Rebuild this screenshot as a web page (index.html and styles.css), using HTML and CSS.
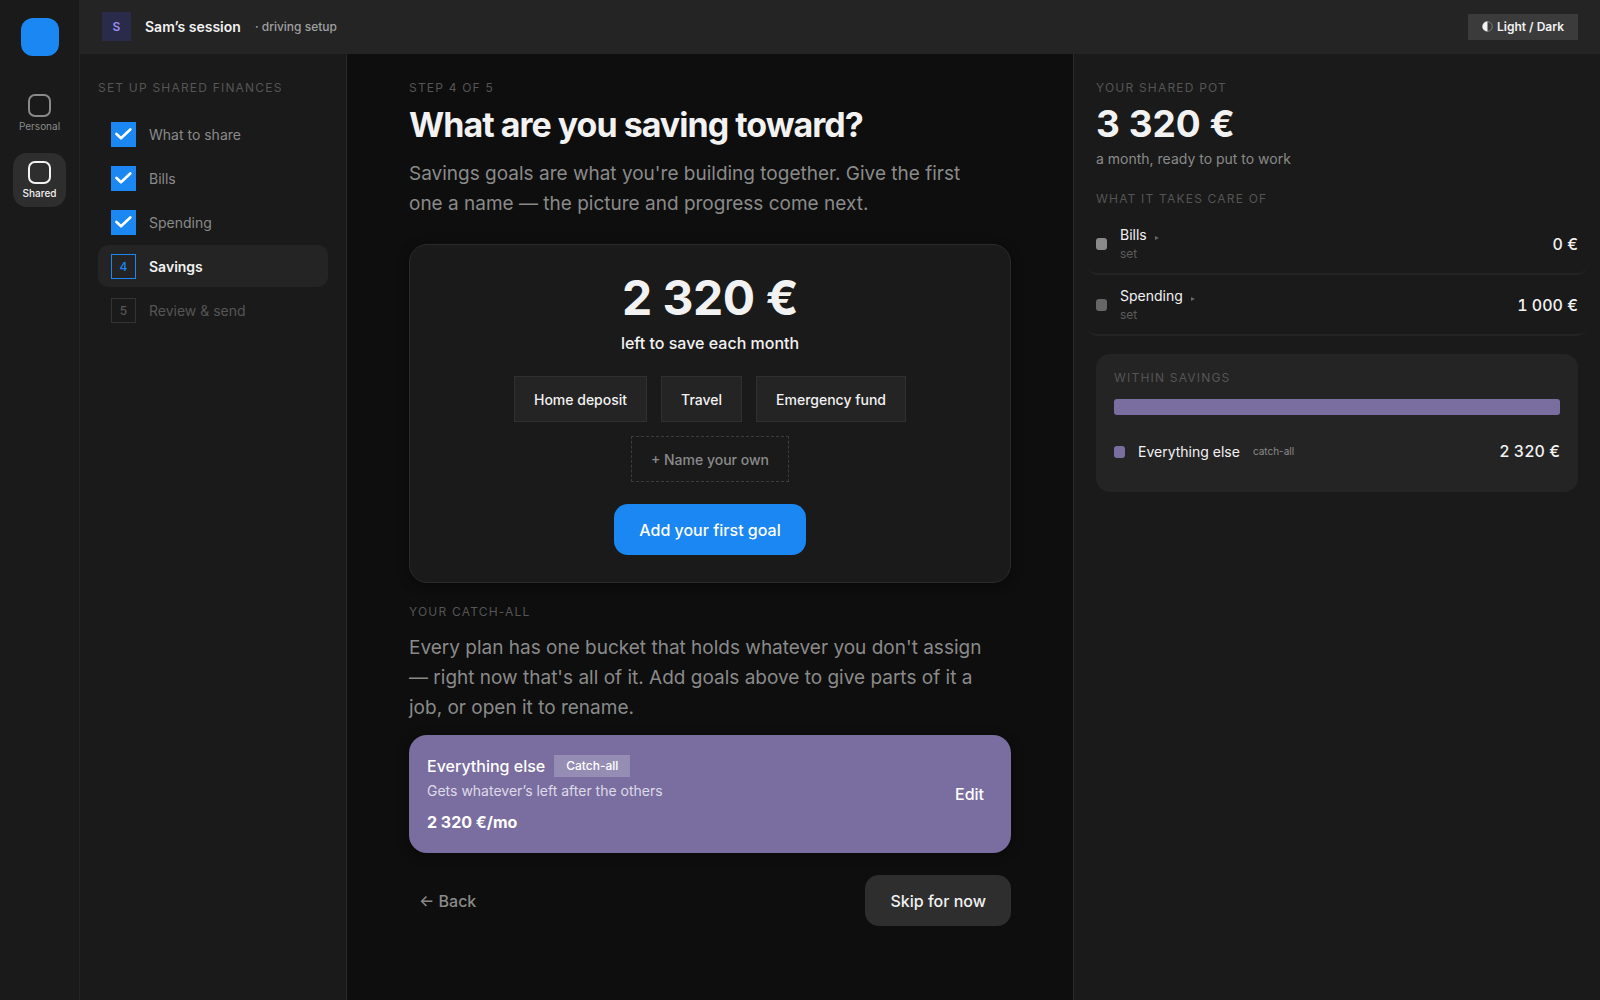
FILE: index.html
```html
<!DOCTYPE html>
<html lang="en">
<head>
  <meta charset="UTF-8" />
  <meta name="viewport" content="width=device-width, initial-scale=1.0"/>
  <title>Set up shared finances</title>
  <link rel="stylesheet" href="styles.css">
</head>
<body>

  <!-- Left rail -->
  <nav class="rail">
    <div class="logo"></div>
    <a href="#personal" class="rail-item">
      <span class="rail-icon"></span>
      Personal
    </a>
    <a href="#shared" class="rail-item active">
      <span class="rail-icon"></span>
      Shared
    </a>
  </nav>

  <div class="app">
    <header class="topbar">
      <span class="avatar">S</span>
      <strong>Sam’s session</strong>
      <span class="session-note">· driving setup</span>
      <button type="button" class="theme-btn">
        <svg width="11" height="11" viewBox="0 0 11 11">
          <circle cx="5.5" cy="5.5" r="4.8" fill="none" stroke="#8a8a8a" stroke-width="0.8"/>
          <path d="M5.5 .4a5.1 5.1 0 0 0 0 10.2z" fill="#f2f2f2"/>
        </svg>
        Light / Dark
      </button>
    </header>

    <div class="columns">

      <!-- Setup steps -->
      <aside class="steps">
        <h2 class="eyebrow">Set up shared finances</h2>
        <ol>
          <li class="step done">
            <span class="step-box"><svg width="17" height="12" viewBox="0 0 17 12"><path d="M1.5 6 6 10.3 15.3 1.5"/></svg></span>
            What to share
          </li>
          <li class="step done">
            <span class="step-box"><svg width="17" height="12" viewBox="0 0 17 12"><path d="M1.5 6 6 10.3 15.3 1.5"/></svg></span>
            Bills
          </li>
          <li class="step done">
            <span class="step-box"><svg width="17" height="12" viewBox="0 0 17 12"><path d="M1.5 6 6 10.3 15.3 1.5"/></svg></span>
            Spending
          </li>
          <li class="step current"><span class="step-box">4</span>Savings</li>
          <li class="step"><span class="step-box">5</span>Review &amp; send</li>
        </ol>
      </aside>

      <main class="content">
        <p class="eyebrow">Step 4 of 5</p>
        <h1>What are you saving toward?</h1>
        <p class="lead">Savings goals are what you're building together. Give the first one a name — the picture and progress come next.</p>

        <section class="goal-card">
          <p class="big-amount">2&nbsp;320&nbsp;€</p>
          <p class="big-label">left to save each month</p>
          <div class="chips">
            <button type="button" class="chip">Home deposit</button>
            <button type="button" class="chip">Travel</button>
            <button type="button" class="chip">Emergency fund</button>
            <button type="button" class="chip dashed">+ Name your own</button>
          </div>
          <button type="button" class="btn primary">Add your first goal</button>
        </section>

        <h2 class="eyebrow">Your catch-all</h2>
        <p class="lead catch-lead">Every plan has one bucket that holds whatever you don't assign — right now that's all of it. Add goals above to give parts of it a job, or open it to rename.</p>

        <section class="bucket">
          <div class="bucket-info">
            <h3>Everything else <span class="tag">Catch-all</span></h3>
            <p>Gets whatever’s left after the others</p>
            <strong>2&nbsp;320&nbsp;€/mo</strong>
          </div>
          <button type="button" class="edit-btn">Edit</button>
        </section>

        <div class="actions">
          <button type="button" class="back-btn">← Back</button>
          <button type="button" class="btn">Skip for now</button>
        </div>
      </main>

      <!-- Shared pot summary -->
      <aside class="pot">
        <h2 class="eyebrow">Your shared pot</h2>
        <p class="pot-amount">3&nbsp;320&nbsp;€</p>
        <p class="pot-note">a month, ready to put to work</p>

        <h2 class="eyebrow">What it takes care of</h2>
        <ul class="pot-list">
          <li>
            <span class="dot"></span>
            <div class="pot-name">
              <span>Bills <svg class="caret" width="4" height="4" viewBox="0 0 4 4"><path d="M0 0 4 2 0 4z"/></svg></span>
              <small>set</small>
            </div>
            <span class="amount">0&nbsp;€</span>
          </li>
          <li>
            <span class="dot dim"></span>
            <div class="pot-name">
              <span>Spending <svg class="caret" width="4" height="4" viewBox="0 0 4 4"><path d="M0 0 4 2 0 4z"/></svg></span>
              <small>set</small>
            </div>
            <span class="amount">1&nbsp;000&nbsp;€</span>
          </li>
        </ul>

        <section class="within">
          <h2 class="eyebrow">Within savings</h2>
          <div class="bar"></div>
          <div class="within-row">
            <span class="dot purple"></span>
            <span class="within-name">Everything else</span>
            <span class="within-tag">catch-all</span>
            <span class="amount">2&nbsp;320&nbsp;€</span>
          </div>
        </section>
      </aside>

    </div>
  </div>

</body>
</html>
```

FILE: styles.css
```css
:root {
  --bg: #0e0e0e;
  --panel: #1a1a1a;
  --raised: #242424;
  --line: #2b2b2b;
  --text: #f2f2f2;
  --muted: #8a8a8a;
  --faint: #555;
  --blue: #1a87f2;
  --purple: #7a6ea0;
}

* {
  box-sizing: border-box;
}

body {
  margin: 0;
  min-height: 100vh;
  display: flex;
  font-family: Inter, "Liberation Sans", sans-serif;
  font-size: 14px;
  background-color: var(--bg);
  color: var(--text);
}

h1, h2, h3, p, ol, ul {
  margin: 0;
  padding: 0;
}

ol, ul {
  list-style: none;
}

button {
  font-family: inherit;
  color: inherit;
  border: none;
  cursor: pointer;
}

.eyebrow {
  font-size: 12px;
  font-weight: 400;
  line-height: 16px;
  letter-spacing: 0.1em;
  text-transform: uppercase;
  color: var(--faint);
}

/* Left rail */
.rail {
  width: 80px;
  flex-shrink: 0;
  display: flex;
  flex-direction: column;
  align-items: center;
  padding: 18px 0;
  background-color: var(--panel);
  border-right: 1px solid var(--raised);
}

.logo {
  width: 38px;
  height: 38px;
  margin-bottom: 30px;
  border-radius: 12px;
  background-color: var(--blue);
}

.rail-item {
  width: 53px;
  height: 54px;
  margin-bottom: 13px;
  display: flex;
  flex-direction: column;
  align-items: center;
  justify-content: center;
  gap: 2px;
  border-radius: 14px;
  font-size: 10px;
  line-height: 14px;
  color: var(--muted);
  text-decoration: none;
}

.rail-item.active {
  background-color: #2e2e2e;
  color: var(--text);
  font-weight: 500;
}

.rail-icon {
  width: 23px;
  height: 23px;
  border: 2px solid;
  border-radius: 7px;
}

/* Top bar */
.app {
  flex: 1;
  min-width: 0;
  display: flex;
  flex-direction: column;
}

.topbar {
  height: 54px;
  display: flex;
  align-items: center;
  padding: 0 22px;
  background-color: var(--raised);
  border-bottom: 1px solid var(--raised);
}

.topbar strong {
  margin: 0 14px;
  font-size: 14px;
  font-weight: 600;
}

.avatar {
  width: 29px;
  height: 29px;
  display: flex;
  align-items: center;
  justify-content: center;
  background-color: #2a2a4a;
  color: #9b8ff5;
  font-size: 12px;
  font-weight: 600;
}

.session-note {
  font-size: 12px;
  font-weight: 500;
  color: #a0a0a0;
}

.theme-btn {
  margin-left: auto;
  height: 26px;
  padding: 0 14px;
  display: flex;
  align-items: center;
  gap: 4px;
  background-color: #3b3b3b;
  font-size: 12px;
  font-weight: 600;
}

.columns {
  flex: 1;
  display: grid;
  grid-template-columns: 267px 1fr 527px;
}

/* Setup steps */
.steps {
  padding: 26px 18px;
  background-color: var(--panel);
  border-right: 1px solid var(--line);
}

.steps ol {
  margin-top: 17px;
  display: grid;
  gap: 2px;
}

.step {
  height: 42px;
  padding: 0 13px;
  display: flex;
  align-items: center;
  gap: 13px;
  border-radius: 10px;
  color: var(--faint);
}

.step.done {
  color: var(--muted);
}

.step.current {
  background-color: var(--raised);
  color: var(--text);
  font-weight: 600;
}

.step-box {
  width: 25px;
  height: 25px;
  display: flex;
  align-items: center;
  justify-content: center;
  border: 1px solid #333;
  font-size: 12px;
  font-weight: 500;
}

.done .step-box {
  background-color: var(--blue);
  border-color: var(--blue);
}

.current .step-box {
  border-color: var(--blue);
  color: var(--blue);
}

.step-box path {
  fill: none;
  stroke: #fff;
  stroke-width: 2.6;
  stroke-linecap: round;
  stroke-linejoin: round;
}

/* Main column */
.content {
  width: 100%;
  max-width: 602px;
  margin: 0 auto;
  padding: 26px 0 72px;
}

h1 {
  margin: 7px 0 12px;
  font-size: 34px;
  font-weight: 700;
  line-height: 44px;
  letter-spacing: -1px;
}

.lead {
  max-width: 580px;
  font-size: 19px;
  line-height: 30px;
  color: var(--muted);
}

.goal-card {
  margin: 25px 0 21px;
  padding: 28px 80px 27px;
  display: flex;
  flex-direction: column;
  align-items: center;
  background-color: var(--panel);
  border: 1px solid var(--line);
  border-radius: 18px;
  box-shadow: 0 2px 12px rgba(0,0,0,0.4);
}

.big-amount {
  font-size: 48px;
  font-weight: 700;
  line-height: 50px;
  letter-spacing: -0.01em;
}

.big-label {
  margin-top: 10px;
  font-size: 16px;
  font-weight: 500;
  line-height: 20px;
}

.chips {
  margin: 23px 0 22px;
  display: flex;
  flex-wrap: wrap;
  justify-content: center;
  gap: 14px;
}

.chip {
  height: 46px;
  padding: 0 19px;
  background-color: var(--raised);
  border: 1px solid #303030;
  font-size: 14px;
  font-weight: 500;
}

.chip.dashed {
  background: none;
  border: 1px dashed #3c3c3c;
  color: var(--muted);
}

.btn {
  height: 51px;
  padding: 0 25px;
  border-radius: 14px;
  background-color: #2e2e2e;
  font-size: 16px;
  font-weight: 500;
}

.btn.primary {
  background-color: var(--blue);
  color: #fff;
}

.catch-lead {
  margin: 13px 0 12px;
}

.bucket {
  padding: 20px 18px;
  display: flex;
  align-items: center;
  border-radius: 18px;
  background-color: var(--purple);
  color: #fff;
  box-shadow: 0 2px 12px rgba(0,0,0,0.4);
}

.bucket-info {
  flex: 1;
}

.bucket h3 {
  display: flex;
  align-items: center;
  gap: 9px;
  font-size: 16px;
  font-weight: 500;
  line-height: 22px;
}

.bucket p {
  margin: 4px 0 10px;
  font-size: 14px;
  line-height: 20px;
  color: #dedae8;
}

.bucket strong {
  display: block;
  font-size: 16px;
  font-weight: 700;
  line-height: 22px;
}

.tag {
  padding: 0 12px;
  background-color: #968db4;
  font-size: 12px;
}

.edit-btn {
  padding: 9px;
  background: none;
  font-size: 16px;
  font-weight: 500;
}

.actions {
  margin-top: 22px;
  display: flex;
  align-items: center;
  justify-content: space-between;
}

.back-btn {
  padding: 10px;
  background: none;
  color: var(--muted);
  font-size: 16px;
  font-weight: 500;
}

/* Shared pot */
.pot {
  padding: 26px 22px;
  background-color: var(--panel);
  border-left: 1px solid var(--line);
}

.pot-amount {
  margin-top: 7px;
  font-size: 37px;
  font-weight: 700;
  line-height: 42px;
}

.pot-note {
  margin: 4px 0 22px;
  font-size: 14px;
  line-height: 20px;
  color: var(--muted);
}

.pot-list {
  margin: 7px -9px 18px;
}

.pot-list li {
  height: 61px;
  padding: 0 9px;
  display: flex;
  align-items: center;
  gap: 13px;
  border-bottom: 2px solid var(--raised);
  border-radius: 10px;
}

.dot {
  width: 11px;
  height: 12px;
  border-radius: 3px;
  background-color: #8a8a8a;
}

.dot.dim {
  background-color: #666;
}

.dot.purple {
  background-color: var(--purple);
}

.pot-name {
  flex: 1;
}

.pot-name span, .pot-name small {
  display: block;
  line-height: 19px;
}

.pot-name small {
  font-size: 12px;
  color: #5c5c5c;
}

.caret {
  margin-left: 4px;
  fill: #666;
}

.amount {
  font-size: 16px;
  font-weight: 500;
  font-variant-numeric: tabular-nums;
}

.within {
  padding: 16px 18px 28px;
  border-radius: 14px;
  background-color: var(--raised);
}

.bar {
  height: 16px;
  margin: 13px 0 24px;
  border-radius: 3px;
  background-color: var(--purple);
}

.within-row {
  display: flex;
  align-items: center;
  gap: 13px;
  line-height: 25px;
}

.within-tag {
  font-size: 10px;
  color: var(--muted);
}

.within-row .amount {
  margin-left: auto;
}
```
